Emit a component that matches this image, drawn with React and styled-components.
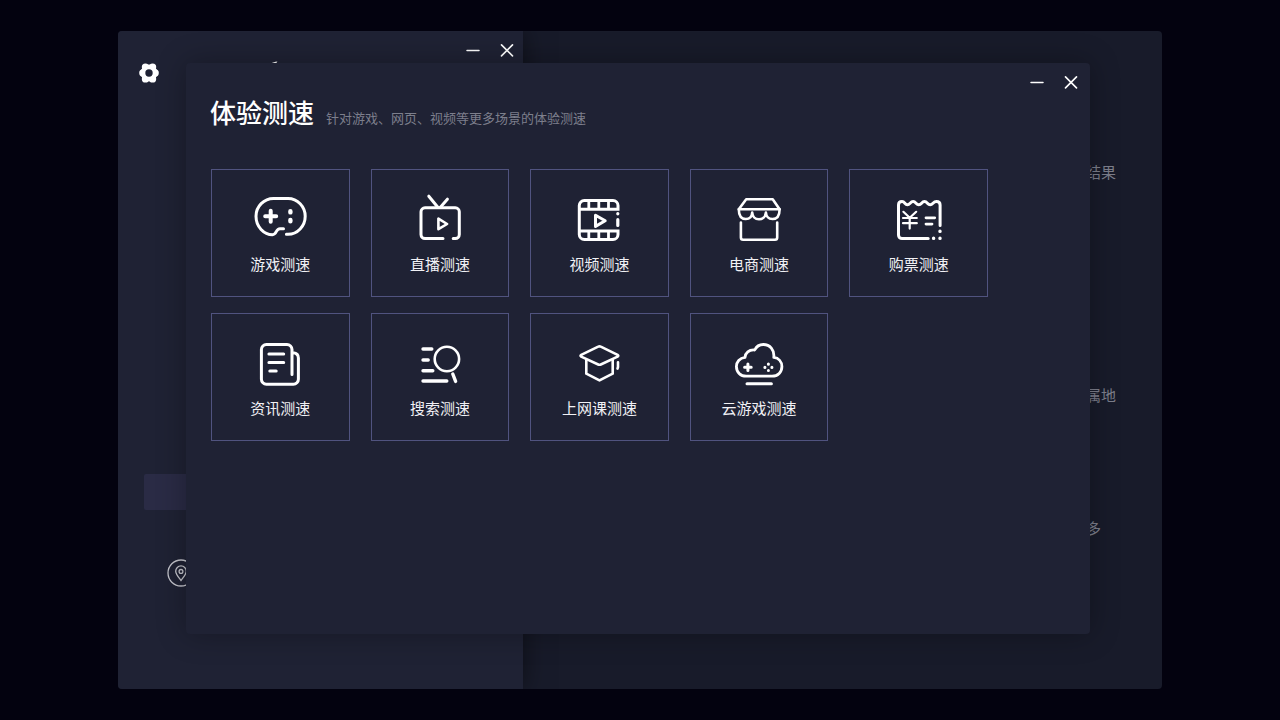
import styled, { createGlobalStyle } from 'styled-components';

const colors = {
  desktop: '#03020f',
  window: '#1f2234',
  results: '#181b2a',
  cardBorder: '#50537f',
  action: '#2a2b45',
  white: '#ffffff',
  label: '#f1f1f5',
  muted: '#7d7f8c',
};

const GlobalStyle = createGlobalStyle`
  * {
    box-sizing: border-box;
  }

  body {
    margin: 0;
    background: ${colors.desktop};
    color: ${colors.white};
    font-family: "Noto Sans CJK SC", "Noto Sans", sans-serif;
  }

  h1, p {
    margin: 0;
  }

  button {
    padding: 0;
    border: 0;
    background: none;
    color: inherit;
    font: inherit;
    cursor: pointer;
  }

  svg {
    display: block;
  }
`;

const Desktop = styled.div`
  position: relative;
  display: flex;
  min-height: 100vh;
  padding: 31px 118px;
`;

const MainWindow = styled.main`
  display: flex;
  flex: 1;
  overflow: hidden;
  border-radius: 4px;
  background: ${colors.results};
`;

const SidePanel = styled.section`
  z-index: 1;
  display: flex;
  flex-direction: column;
  flex: 0 0 405px;
  padding-bottom: 102px;
  background: ${colors.window};
  box-shadow: 0 0 24px rgba(0, 0, 0, 0.5);
`;

const TitleBar = styled.div`
  display: flex;
  justify-content: flex-end;
  align-items: center;
  gap: 20px;
  height: 30px;
  padding: 8px ${props => props.$side}px 0 0;
`;

const IconButton = styled.button`
  width: ${props => props.$size}px;
  height: ${props => props.$size}px;
`;

const BrandRow = styled.div`
  display: flex;
  align-items: center;
  gap: 106px;
  height: 24px;
  padding-left: 21px;
`;

const BrandMark = styled.svg`
  align-self: flex-start;
`;

const ActionButton = styled.button`
  height: 36px;
  margin: auto 26px 49px;
  border-radius: 2px;
  background: ${colors.action};
`;

const LocationRow = styled.div`
  padding-left: 49px;
`;

const ResultsPanel = styled.section`
  display: grid;
  flex: 1;
  grid-template-rows: 223px 133px 1fr;
  justify-content: end;
  padding: 131px 46px 0 0;
`;

const ResultLabel = styled.p`
  color: ${colors.muted};
  font-size: 15px;
  line-height: 20px;
`;

const Dialog = styled.section`
  position: absolute;
  z-index: 2;
  top: 63px;
  right: 190px;
  bottom: 86px;
  left: 186px;
  border-radius: 4px;
  background: ${colors.window};
  box-shadow: 0 0 30px rgba(0, 0, 0, 0.3);
`;

const DialogHeader = styled.header`
  display: flex;
  align-items: baseline;
  gap: 12px;
  padding: 0 24px;
`;

const Title = styled.h1`
  font-size: 26px;
  font-weight: 500;
  line-height: 38px;
`;

const Subtitle = styled.p`
  color: ${colors.muted};
  font-size: 13px;
  line-height: 20px;
`;

const CardGrid = styled.div`
  display: grid;
  grid-template-columns: repeat(5, 1fr);
  gap: 16px 21px;
  padding: 38px 102px 0 25px;
`;

const Card = styled.button`
  display: flex;
  flex-direction: column;
  align-items: center;
  gap: 8px;
  height: 128px;
  padding-top: 19px;
  border: 1px solid ${colors.cardBorder};

  &:hover {
    background: ${colors.action};
  }
`;

const CardIcon = styled.svg`
  width: 60px;
  height: 56px;
  fill: none;
  stroke: ${colors.white};
  stroke-width: 3;
  stroke-linecap: round;
  stroke-linejoin: round;
`;

const CardLabel = styled.span`
  color: ${colors.label};
  font-size: 15px;
  line-height: 22px;
`;

const scenes = [
  {
    name: '游戏测速',
    icon: (
      <>
        <path d="M36.4 45.3H38C47.5 45.3 55.2 37.1 55.2 27.3S47.5 9.5 38 9.5H23.5C14 9.5 6 17.3 6 27.3C6 37.8 14 45.7 22.5 45.7C27 45.7 25.5 39.7 30 39.7H33.5" />
        <path strokeWidth="4" d="M15.2 27.3H26.2M20.7 21.8V32.8" />
        <path strokeWidth="4.4" d="M40.4 22.2V23.4M40.4 31V32.2" />
      </>
    ),
  },
  {
    name: '直播测速',
    icon: (
      <>
        <path d="M33 49.6H15A4 4 0 0 1 11 45.6V22.8A4 4 0 0 1 15 18.8H45.3A4 4 0 0 1 49.3 22.8V45.6A4 4 0 0 1 45.3 49.6H43.2" />
        <path d="M18.8 7.2L27.6 18M37.4 10.2L30.6 18" />
        <path strokeWidth="2.6" d="M28.4 29.7V40.2L37.1 35Z" />
      </>
    ),
  },
  {
    name: '视频测速',
    icon: (
      <>
        <path strokeLinecap="butt" d="M50.5 20.3H10.3M49 21.5V16.5A5 5 0 0 0 44 11.5H15.3A5 5 0 0 0 10.3 16.5V45.5A5 5 0 0 0 15.3 50.5H44A5 5 0 0 0 49 45.5V40.5M50.5 41.9H10.3" />
        <path strokeLinecap="butt" strokeWidth="2.8" d="M19.8 11.5V20M29.8 11.5V20M39.5 11.5V20M19.8 42V50.5M29.8 42V50.5M39.5 42V50.5" />
        <path strokeWidth="3.2" d="M48.8 24.6V24.8M48.8 30.7V36.4" />
        <path d="M26.5 26.2V37.4L36.2 31.8Z" />
      </>
    ),
  },
  {
    name: '电商测速',
    icon: (
      <g strokeWidth="2.6">
        <path d="M9.8 20.2L17.2 10.3H43.7L50.6 20.2Z" />
        <path d="M9.8 20.3C9.8 26.5 12.5 30 16.8 30S23 27 23.2 23.5C23.5 27.5 26 30.3 30 30.3S36.6 27.5 36.9 23.5C37.1 27 39.3 30 43.6 30S50.6 26.5 50.6 20.3" />
        <path d="M11.9 33.6V48.5A2.2 2.2 0 0 0 14.1 50.7H46A2.2 2.2 0 0 0 48.2 48.5V33.6" />
      </g>
    ),
  },
  {
    name: '购票测速',
    icon: (
      <>
        <path d="M39.2 49.6H13A3.5 3.5 0 0 1 9.5 46.1V16C9.5 13.4 11 12.6 13 12.6C16 12.6 15.7 15.7 18.4 15.7S21.2 12.6 24.1 12.6S27 15.7 29.8 15.7S32.6 12.6 35.5 12.6S38.4 15.7 41.2 15.7S44 12.6 47.4 12.6C50 12.6 51.1 13.6 51.1 16V36.4" />
        <path strokeWidth="3.4" d="M44.6 49.3V49.4M51 49.3V49.4M51 42.3V42.4" />
        <path strokeWidth="2.2" d="M14.4 22.8L20.7 28.8L27.2 22.8M14 29H27.8M14 34.2H27.8M20.7 28.8V39.6" />
        <path strokeWidth="2.8" d="M37 28.8H45.7M37 35.1H43" />
      </>
    ),
  },
  {
    name: '资讯测速',
    icon: (
      <>
        <path d="M42 41.4V16.5A5 5 0 0 0 37 11.5H16.4A5 5 0 0 0 11.4 16.5V46.2A5 5 0 0 0 16.4 51.2H43.4A5 5 0 0 0 48.4 46.2V25C48.4 22 46.5 20 43.2 19.7" />
        <path d="M18.9 21H33.7M18.9 29.5H33.7M19.8 38H26.2" />
      </>
    ),
  },
  {
    name: '搜索测速',
    icon: (
      <>
        <path strokeWidth="3.4" d="M13 16H21.8M13 27H18.2M13 37.7H22.8M13 48H36.8" />
        <circle cx="36.9" cy="26" r="12.2" strokeWidth="2.6" />
        <path strokeWidth="3.4" d="M42.8 41L45.6 48.4" />
      </>
    ),
  },
  {
    name: '上网课测速',
    icon: (
      <g strokeWidth="2.6">
        <path d="M29.2 13.7Q30.5 13 31.8 13.7L48.6 21.8Q50 22.7 48.6 23.6L31.8 31.5Q30.5 32.1 29.2 31.5L12.2 23.6Q10.8 22.7 12.2 21.8Z" />
        <path d="M17.3 27V40.7L30.5 47.4L43.7 40.7V27" />
        <path d="M49 29.2V34L48.5 35.6" />
      </g>
    ),
  },
  {
    name: '云游戏测速',
    icon: (
      <>
        <path strokeWidth="2.8" d="M17.2 43.2H43C49 43.2 52.9 39 52.9 33.6C52.9 28.6 49.6 24.9 44.8 24.3C45.6 17 41 11.5 34.3 11.5C30.4 11.5 27.3 13.7 25.7 17C20 16.4 16.2 20 16 24.4C10.6 25 7.4 29 7.4 33.6C7.4 39 11.4 43.2 17.2 43.2Z" />
        <path d="M15.6 34.3H22.2M18.9 31V37.6M18 50.7H42.4" />
        <path strokeWidth="3" d="M39.4 31.1V31.2M39.4 37.5V37.6M35.9 34.3V34.4M42.9 34.3V34.4" />
      </>
    ),
  },
];

const resultLabels = ['结果', '属地', '多'];

function WindowControls({ side }) {
  return (
    <TitleBar $side={side}>
      <IconButton $size={14} aria-label="最小化">
        <svg width="14" height="14" viewBox="0 0 14 14" fill="none" stroke="currentColor" strokeWidth="1.5">
          <path d="M1 7.4H13" strokeLinecap="round" />
        </svg>
      </IconButton>
      <IconButton $size={14} aria-label="关闭">
        <svg width="14" height="14" viewBox="0 0 14 14" fill="none" stroke="currentColor" strokeWidth="1.6">
          <path d="M1.5 1.9L12.5 12.9M12.5 1.9L1.5 12.9" strokeLinecap="round" />
        </svg>
      </IconButton>
    </TitleBar>
  );
}

function GearIcon() {
  return (
    <svg width="20" height="20" viewBox="0 0 20 20">
      <g fill="currentColor">
        <circle cx="10" cy="10" r="8.4" />
        <circle cx="6.4" cy="4.1" r="3.6" />
        <circle cx="13.6" cy="4.1" r="3.6" />
        <circle cx="16.1" cy="10" r="3.7" />
        <circle cx="13.6" cy="15.9" r="3.6" />
        <circle cx="6.4" cy="15.9" r="3.6" />
        <circle cx="3.9" cy="10" r="3.7" />
      </g>
      <circle cx="10" cy="10" r="3.7" fill={colors.window} />
    </svg>
  );
}

function App() {
  return (
    <>
      <GlobalStyle />
      <Desktop>
        <MainWindow>
          <SidePanel>
            <WindowControls side={9} />
            <BrandRow>
              <IconButton $size={20} aria-label="设置">
                <GearIcon />
              </IconButton>
              <BrandMark width="20" height="12" viewBox="0 0 20 12" fill="currentColor">
                <path d="M6 2.2C8 1.6 9.6 0.8 12.4 0.4L10 4Z" />
              </BrandMark>
            </BrandRow>
            <ActionButton aria-label="测速" />
            <LocationRow>
              <svg width="28" height="28" viewBox="0 0 28 28" fill="none" stroke="#c3c4cb" strokeWidth="1.3">
                <circle cx="14" cy="14" r="13" />
                <path d="M14 21.5C11.5 18.2 8.7 15 8.7 12.2A5.3 5.3 0 0 1 19.3 12.2C19.3 15 16.5 18.2 14 21.5Z" />
                <circle cx="14" cy="12.4" r="1.9" />
              </svg>
            </LocationRow>
          </SidePanel>
          <ResultsPanel>
            {resultLabels.map(label => (
              <ResultLabel key={label}>{label}</ResultLabel>
            ))}
          </ResultsPanel>
        </MainWindow>

        <Dialog>
          <WindowControls side={12} />
          <DialogHeader>
            <Title>体验测速</Title>
            <Subtitle>针对游戏、网页、视频等更多场景的体验测速</Subtitle>
          </DialogHeader>
          <CardGrid>
            {scenes.map(scene => (
              <Card key={scene.name}>
                <CardIcon viewBox="0 0 60 56">{scene.icon}</CardIcon>
                <CardLabel>{scene.name}</CardLabel>
              </Card>
            ))}
          </CardGrid>
        </Dialog>
      </Desktop>
    </>
  );
}

export default App;
